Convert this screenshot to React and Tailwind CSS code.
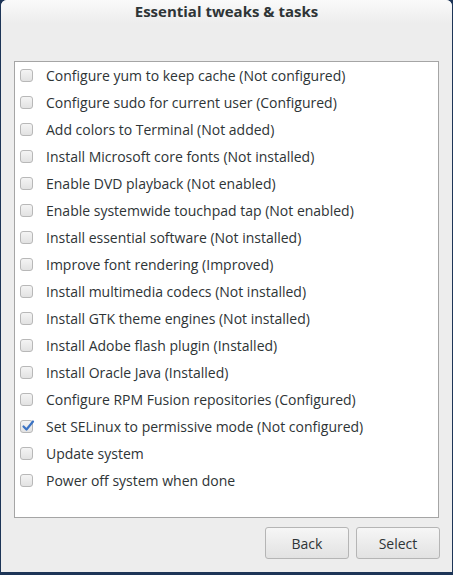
import React from "react";

const items = [
  ["Configure yum to keep cache (Not configured)", false],
  ["Configure sudo for current user (Configured)", false],
  ["Add colors to Terminal (Not added)", false],
  ["Install Microsoft core fonts (Not installed)", false],
  ["Enable DVD playback (Not enabled)", false],
  ["Enable systemwide touchpad tap (Not enabled)", false],
  ["Install essential software (Not installed)", false],
  ["Improve font rendering (Improved)", false],
  ["Install multimedia codecs (Not installed)", false],
  ["Install GTK theme engines (Not installed)", false],
  ["Install Adobe flash plugin (Installed)", false],
  ["Install Oracle Java (Installed)", false],
  ["Configure RPM Fusion repositories (Configured)", false],
  ["Set SELinux to permissive mode (Not configured)", true],
  ["Update system", false],
  ["Power off system when done", false],
];

function Box({ checked }) {
  return (
    <div className="relative w-[13px] h-[13px] rounded-[3px] border border-[#b8b8b8] bg-gradient-to-b from-[#f4f4f4] to-[#e2e2e2] shrink-0">
      {checked && (
        <svg className="absolute left-[0px] top-[-2px]" width="14" height="14" viewBox="0 0 14 14">
          <path d="M2.5 7.5 L5.5 10.5 L12 2.5" fill="none" stroke="#3b73c4" strokeWidth="2.2" strokeLinecap="round" strokeLinejoin="round" />
        </svg>
      )}
    </div>
  );
}

export default function App() {
  return (
    <div className="w-[453px] h-[575px] bg-[#1d3557] flex flex-col" style={{ fontFamily: '"Open Sans", "DejaVu Sans", sans-serif' }}>
      <div className="mx-[1px] h-[572px] rounded-t-[6px] bg-[#ededed] flex flex-col">
        <div className="h-[23px] rounded-t-[6px] bg-gradient-to-b from-[#fafafa] to-[#ededed] flex items-center justify-center">
          <span className="text-[15px] font-bold text-[#2e3436]">Essential tweaks &amp; tasks</span>
        </div>
        <div className="mt-[38px] mx-[13px] h-[457px] bg-white border border-[#a5a5a5]">
          {items.map(([t, c], i) => (
            <div key={i} className="h-[27px] flex items-center pl-[5px] gap-[13px]">
              <Box checked={c} />
              <span className="text-[14px] text-[#2e3436]">{t}</span>
            </div>
          ))}
        </div>
        <div className="flex justify-end gap-[7px] mr-[12px] mt-[9px]">
          <button className="w-[84px] h-[32px] rounded-[3px] border border-[#b5b5b5] bg-gradient-to-b from-[#f6f6f6] to-[#e2e2e2] text-[14px] text-[#2e3436]">Back</button>
          <button className="w-[84px] h-[32px] rounded-[3px] border border-[#b5b5b5] bg-gradient-to-b from-[#f6f6f6] to-[#e2e2e2] text-[14px] text-[#2e3436]">Select</button>
        </div>
      </div>
    </div>
  );
}
